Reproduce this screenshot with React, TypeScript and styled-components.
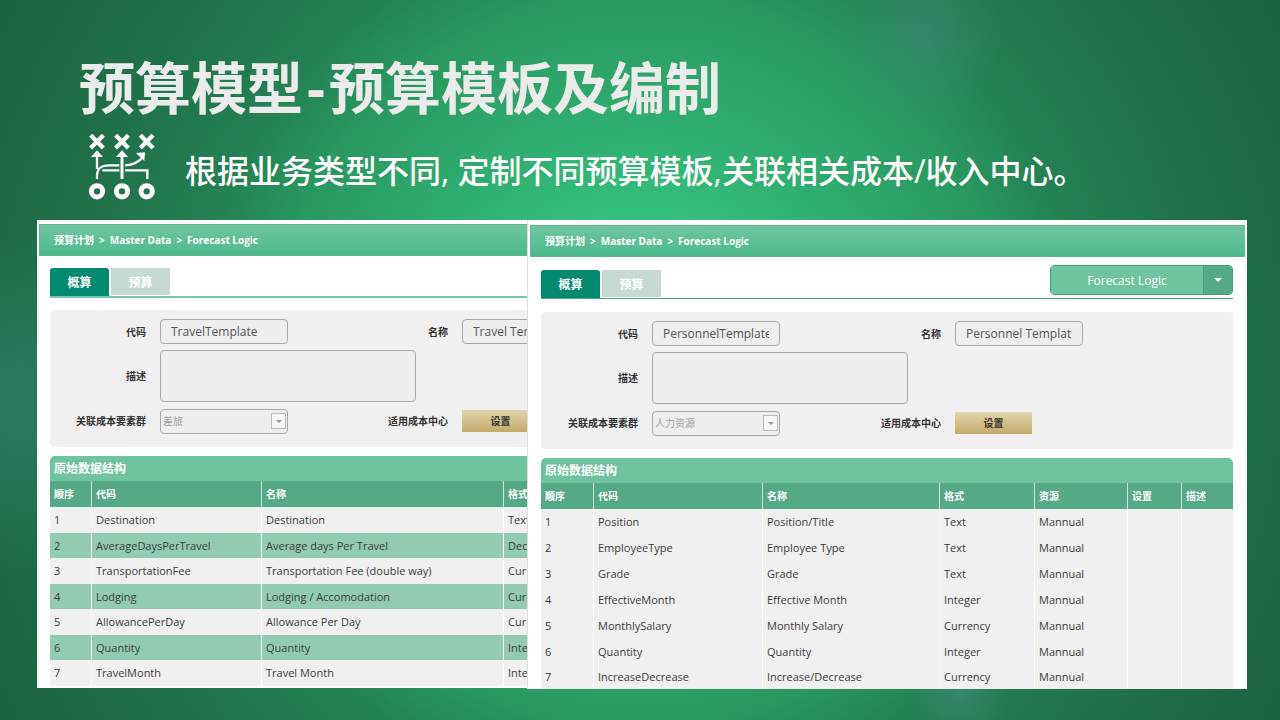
import React from "react";
import styled, { createGlobalStyle, css } from "styled-components";

const GlobalStyle = createGlobalStyle`
  *, *::before, *::after { box-sizing: border-box; }
  body {
    margin: 0;
    background: #1d6b43;
    font-family: "Open Sans", "Noto Sans CJK SC", sans-serif;
  }
  button, input, select, textarea { font-family: inherit; margin: 0; }
`;

const Slide = styled.main`
  min-height: 100vh;
  padding: 53px 33px 31px 37px;
  overflow: hidden;
  background:
    radial-gradient(ellipse 80px 90px at 72% 5%, rgba(64, 140, 124, 0.5), rgba(64, 140, 124, 0) 100%),
    radial-gradient(ellipse 110px 170px at 1% 56%, rgba(56, 140, 124, 0.5), rgba(56, 140, 124, 0) 100%),
    radial-gradient(ellipse 50px 60px at 75% 96%, rgba(64, 140, 124, 0.6), rgba(64, 140, 124, 0) 100%),
    radial-gradient(circle 740px at 50% 50%, #38c582 0%, #35bf7c 20%, #31b475 27%, #289760 50%, #238154 60%, #1f724a 76%, #1a6341 100%);
`;

const Heading = styled.header`
  padding-left: 42px;
`;

const Title = styled.h1`
  margin: 0;
  font-size: 56px;
  line-height: 68px;
  font-weight: 700;
  color: #ebebeb;
`;

const Dash = styled.span`
  padding: 0 4px;
`;

const Lead = styled.div`
  display: flex;
  align-items: center;
  gap: 14px;
  height: 99px;
`;

const Subtitle = styled.p`
  margin: 0;
  font-size: 32px;
  line-height: 40px;
  font-weight: 500;
  color: #fff;
`;

const Screens = styled.div`
  display: grid;
  grid-template-columns: minmax(0, 490fr) minmax(0, 720fr);
  align-items: start;
`;

const Panel = styled.section<{ $front?: boolean }>`
  overflow: hidden;
  background: #fff;
  padding: ${(p) => (p.$front ? "5px 2px 0" : "4px 0 2px 2px")};
  ${(p) => p.$front && css`border-left: 1px solid #d9dfdc;`}
`;

const Breadcrumb = styled.nav`
  display: flex;
  align-items: center;
  gap: 5px;
  height: 32px;
  padding: 0 14px;
  border: 1px solid #5cb893;
  border-right: 0;
  background: linear-gradient(#6fc6a0, #4cb98d);
  color: #fff;
  font-size: 10px;
  line-height: 14px;
  font-weight: 700;
`;

const Crumb = styled.a`
  color: inherit;
  text-decoration: none;
`;

const Body = styled.div<{ $front?: boolean }>`
  padding: 0 ${(p) => (p.$front ? 12 : 0)}px 0 11px;
`;

const Toolbar = styled.div<{ $front?: boolean }>`
  display: flex;
  justify-content: space-between;
  align-items: flex-end;
  height: 42px;
  border-bottom: ${(p) => (p.$front ? "1px solid #45a78b" : "2px solid #7cc3b1")};
`;

const Tabs = styled.div`
  display: flex;
  gap: 2px;
`;

const Tab = styled.button<{ $active?: boolean }>`
  width: 59px;
  height: ${(p) => (p.$active ? 28 : 27)}px;
  padding: 0;
  border: 0;
  border-radius: ${(p) => (p.$active ? "3px 3px 0 0" : "0")};
  background: ${(p) => (p.$active ? "#028a6e" : "#c6dad1")};
  color: #fff;
  font-size: 12px;
  font-weight: 700;
`;

const Split = styled.div`
  display: flex;
  height: 30px;
  margin-bottom: 3px;
  border: 1px solid #3fa27c;
  border-radius: 4px;
  overflow: hidden;
`;

const SplitMain = styled.button`
  width: 152px;
  padding: 0;
  border: 0;
  background: #6ec49f;
  color: #fff;
  font-size: 12px;
`;

const SplitToggle = styled.button`
  display: grid;
  place-items: center;
  width: 29px;
  padding: 0;
  border: 0;
  border-left: 1px solid #3fa27c;
  background: #54aa86;
  color: #fff;
`;

const Form = styled.form<{ $front?: boolean }>`
  display: grid;
  grid-template-columns: ${(p) => (p.$front ? "97px 213px" : "96px 212px")} 62px minmax(0, 1fr);
  grid-template-rows: 25px 52px 25px;
  gap: 6px 14px;
  align-items: center;
  margin: ${(p) => (p.$front ? 13 : 12)}px 0 9px;
  padding: 9px 0 14px;
  border-radius: ${(p) => (p.$front ? "4px" : "4px 0 0 4px")};
  background: #f0f0f0;
`;

const Label = styled.label`
  text-align: right;
  white-space: nowrap;
  color: #333;
  font-size: 10px;
  line-height: 14px;
  font-weight: 700;
`;

const control = css`
  border: 1px solid #a9a9a9;
  border-radius: 4px;
  background: #eee;
  outline: 0;
`;

const TextBox = styled.input`
  ${control}
  width: 128px;
  height: 25px;
  padding: 0 10px;
  color: #555;
  font-size: 12px;
`;

const TextArea = styled.textarea`
  ${control}
  grid-column: 2 / 4;
  width: 256px;
  height: 52px;
  resize: none;
`;

const SelectBox = styled.div`
  position: relative;
  width: 128px;
  height: 25px;
`;

const Select = styled.select`
  ${control}
  appearance: none;
  width: 100%;
  height: 100%;
  padding: 0 2px;
  color: #a0a0a0;
  font-size: 10px;
  opacity: 1;
`;

const SelectArrow = styled.span`
  position: absolute;
  top: 5px;
  right: 2px;
  display: grid;
  place-items: center;
  width: 15px;
  height: 16px;
  border: 1px solid #b4bcc0;
  background: #f6f6f6;
  color: #999;
  pointer-events: none;
`;

const GoldButton = styled.button`
  width: 77px;
  height: 22px;
  padding: 0;
  border: 0;
  background: linear-gradient(#e0d5ae, #c3ab67);
  color: #333;
  font-size: 10px;
  font-weight: 700;
`;

const Table = styled.table`
  width: 100%;
  table-layout: fixed;
  border-collapse: separate;
  border-spacing: 0;
  font-size: 11px;
  color: #3c3c3c;
`;

const Caption = styled.caption<{ $front?: boolean }>`
  height: 25px;
  padding: 0 4px;
  border-radius: ${(p) => (p.$front ? "5px 5px 0 0" : "5px 0 0 0")};
  background: #6ec49f;
  color: #fff;
  font-size: 12px;
  line-height: 25px;
  font-weight: 700;
  text-align: left;
`;

const cell = css`
  padding: 0 4px;
  text-align: left;
  white-space: nowrap;
  line-height: 16px;
`;

const Th = styled.th`
  ${cell}
  height: 26px;
  background: #54aa86;
  color: #fff;
  font-size: 10px;
  font-weight: 700;
  & + & { border-left: 1px solid #c9e6da; }
`;

const Td = styled.td`
  ${cell}
  & + & { border-left: 1px solid #fff; }
`;

const Row = styled.tr<{ $striped?: boolean }>`
  height: 26px;
  background: #f0f0f0;
  ${(p) =>
    p.$striped
      ? css`&:nth-child(even) { height: 25px; background: #93cbb2; }`
      : css`&:last-child { height: 24px; }`}
`;

function Caret({ width = 8 }: { width?: number }) {
  return (
    <svg width={width} height={width / 2} viewBox="0 0 8 4" aria-hidden="true">
      <path d="M0 0h8L4 4z" fill="currentColor" />
    </svg>
  );
}

function PlaybookIcon() {
  const xs = [24, 99, 173];
  return (
    <svg width="92" height="80" viewBox="-30 18 276 240" fill="none" stroke="#fff" aria-hidden="true">
      {xs.map((x) => (
        <g key={x}>
          <path d={`M${x - 19} 31l38 38m0-38l-38 38`} strokeWidth="13" />
          <circle cx={x} cy="199" r="17" strokeWidth="15" />
        </g>
      ))}
      <g strokeWidth="7">
        <path d="M24 94v38" />
        <path d="M99 94v68" strokeWidth="9" />
        <path d="M24 162v-8c0-24 12-33 36-33h31" />
        <path d="M108 121c24-1 42-9 54-26" />
        <path d="M40 136h51M108 136h67v26" />
      </g>
      <g fill="#fff" stroke="none">
        <path d="M24 76l18 20H6z" />
        <path d="M99 76l18 20H81z" />
        <path d="M168 82l-27 2 25 24z" />
      </g>
    </svg>
  );
}

interface ScreenProps {
  id: string;
  front?: boolean;
  code: string;
  name: string;
  group: string;
  headers: string[];
  widths: number[];
  rows: string[][];
}

function Screen({ id, front, code, name, group, headers, widths, rows }: ScreenProps) {
  return (
    <Panel $front={front}>
      <Breadcrumb>
        <Crumb href="#plan">预算计划</Crumb>
        <span>&gt;</span>
        <Crumb href="#master">Master Data</Crumb>
        <span>&gt;</span>
        <Crumb href="#logic">Forecast Logic</Crumb>
      </Breadcrumb>
      <Body $front={front}>
        <Toolbar $front={front}>
          <Tabs role="tablist">
            <Tab role="tab" aria-selected="true" $active>概算</Tab>
            <Tab role="tab" aria-selected="false">预算</Tab>
          </Tabs>
          {front && (
            <Split>
              <SplitMain>Forecast Logic</SplitMain>
              <SplitToggle aria-haspopup="menu"><Caret /></SplitToggle>
            </Split>
          )}
        </Toolbar>
        <Form $front={front}>
          <Label htmlFor={`${id}-code`}>代码</Label>
          <TextBox id={`${id}-code`} defaultValue={code} />
          <Label htmlFor={`${id}-name`}>名称</Label>
          <TextBox id={`${id}-name`} defaultValue={name} />
          <Label htmlFor={`${id}-desc`}>描述</Label>
          <TextArea id={`${id}-desc`} />
          <span />
          <Label htmlFor={`${id}-group`}>关联成本要素群</Label>
          <SelectBox>
            <Select id={`${id}-group`} disabled>
              <option>{group}</option>
            </Select>
            <SelectArrow><Caret width={6} /></SelectArrow>
          </SelectBox>
          <Label htmlFor={`${id}-set`}>适用成本中心</Label>
          <GoldButton id={`${id}-set`} type="button">设置</GoldButton>
        </Form>
        <Table>
          <Caption $front={front}>原始数据结构</Caption>
          <colgroup>
            {headers.map((h, i) => (
              <col key={h} width={widths[i]} />
            ))}
          </colgroup>
          <thead>
            <tr>
              {headers.map((h) => <Th key={h} scope="col">{h}</Th>)}
            </tr>
          </thead>
          <tbody>
            {rows.map((row, i) => (
              <Row key={row[0]} $striped={!front}>
                <Td>{i + 1}</Td>
                {headers.slice(1).map((h, j) => (
                  <Td key={h}>{h === "资源" ? "Mannual" : row[j]}</Td>
                ))}
              </Row>
            ))}
          </tbody>
        </Table>
      </Body>
    </Panel>
  );
}

const TRAVEL = [
  ["Destination", "Destination", "Text"],
  ["AverageDaysPerTravel", "Average days Per Travel", "Dec"],
  ["TransportationFee", "Transportation Fee (double way)", "Curr"],
  ["Lodging", "Lodging / Accomodation", "Curr"],
  ["AllowancePerDay", "Allowance Per Day", "Curr"],
  ["Quantity", "Quantity", "Inte"],
  ["TravelMonth", "Travel Month", "Inte"],
];

const PERSONNEL = [
  ["Position", "Position/Title", "Text"],
  ["EmployeeType", "Employee Type", "Text"],
  ["Grade", "Grade", "Text"],
  ["EffectiveMonth", "Effective Month", "Integer"],
  ["MonthlySalary", "Monthly Salary", "Currency"],
  ["Quantity", "Quantity", "Integer"],
  ["IncreaseDecrease", "Increase/Decrease", "Currency"],
];

export default function App() {
  return (
    <>
      <GlobalStyle />
      <Slide>
        <Heading>
          <Title>预算模型<Dash>-</Dash>预算模板及编制</Title>
          <Lead>
            <PlaybookIcon />
            <Subtitle>根据业务类型不同, 定制不同预算模板,关联相关成本/收入中心。</Subtitle>
          </Lead>
        </Heading>
        <Screens>
          <Screen
            id="travel"
            code="TravelTemplate"
            name="Travel Template"
            group="差旅"
            headers={["顺序", "代码", "名称", "格式"]}
            widths={[41, 170, 242, 24]}
            rows={TRAVEL}
          />
          <Screen
            id="personnel"
            front
            code="PersonnelTemplate"
            name="Personnel Templat"
            group="人力资源"
            headers={["顺序", "代码", "名称", "格式", "资源", "设置", "描述"]}
            widths={[52, 169, 177, 95, 93, 54, 52]}
            rows={PERSONNEL}
          />
        </Screens>
      </Slide>
    </>
  );
}
